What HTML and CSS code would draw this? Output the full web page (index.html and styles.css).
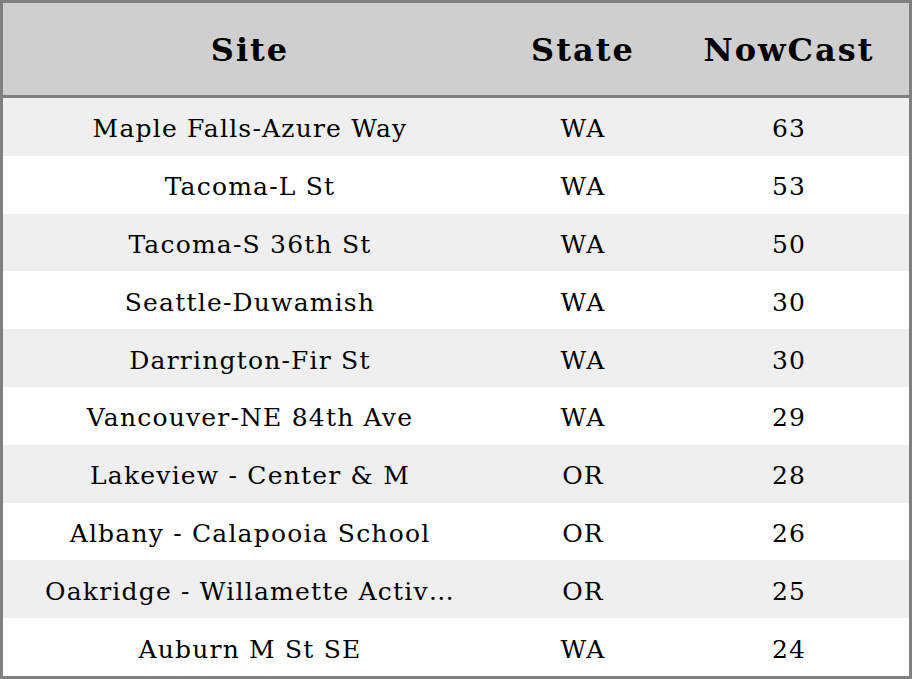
FILE: index.html
```html
<!DOCTYPE html>
<html>
<head>
<meta charset="utf-8">
<link rel="stylesheet" href="styles.css">
</head>
<body>
<div class="table">
  <div class="head">
    <div class="c site">Site</div>
    <div class="c state">State</div>
    <div class="c now">NowCast</div>
  </div>
  <div class="row alt"><div class="c site">Maple Falls-Azure Way</div><div class="c state">WA</div><div class="c now">63</div></div>
  <div class="row"><div class="c site">Tacoma-L St</div><div class="c state">WA</div><div class="c now">53</div></div>
  <div class="row alt"><div class="c site">Tacoma-S 36th St</div><div class="c state">WA</div><div class="c now">50</div></div>
  <div class="row"><div class="c site">Seattle-Duwamish</div><div class="c state">WA</div><div class="c now">30</div></div>
  <div class="row alt"><div class="c site">Darrington-Fir St</div><div class="c state">WA</div><div class="c now">30</div></div>
  <div class="row"><div class="c site">Vancouver-NE 84th Ave</div><div class="c state">WA</div><div class="c now">29</div></div>
  <div class="row alt"><div class="c site">Lakeview - Center &amp; M</div><div class="c state">OR</div><div class="c now">28</div></div>
  <div class="row"><div class="c site">Albany - Calapooia School</div><div class="c state">OR</div><div class="c now">26</div></div>
  <div class="row alt"><div class="c site">Oakridge - Willamette Activ…</div><div class="c state">OR</div><div class="c now">25</div></div>
  <div class="row"><div class="c site">Auburn M St SE</div><div class="c state">WA</div><div class="c now">24</div></div>
</div>
</body>
</html>
```
FILE: styles.css
```css
html, body {
  margin: 0;
  padding: 0;
  background: #ffffff;
}
body {
  font-family: "DejaVu Serif", serif;
  color: #000;
}
.table {
  width: 912px;
  height: 679px;
  box-sizing: border-box;
  border: 3px solid #808080;
  display: flex;
  flex-direction: column;
}
.head {
  display: grid;
  grid-template-columns: 494px 172px 240px;
  background: #cfcfcf;
  border-bottom: 3px solid #808080;
  font-weight: bold;
  font-size: 32px;
  letter-spacing: 2px;
  align-items: center;
  flex: none;
  padding-top: 2px;
  box-sizing: border-box;
  height: 95px;
}
.row {
  display: grid;
  grid-template-columns: 494px 172px 240px;
  flex: 1;
  align-items: center;
  font-size: 25px;
  letter-spacing: 1.2px;
  background: #ffffff;
  padding-top: 4px;
}
.row.alt {
  background: #efefef;
}
.c {
  text-align: center;
  white-space: nowrap;
}
```
